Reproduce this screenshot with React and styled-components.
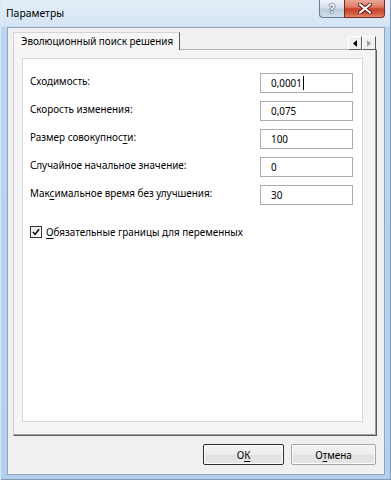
import React from "react";
import styled, { createGlobalStyle } from "styled-components";

const FONT = `"Noto Sans", "Open Sans", "DejaVu Sans", sans-serif`;
const FS = "9.9px";

const Global = createGlobalStyle`
  html, body { margin: 0; padding: 0; background: #ffffff; }
  body { font-family: ${FONT}; }
  * { box-sizing: border-box; }
`;

const Window = styled.div`
  width: 391px;
  height: 480px;
  display: flex;
  flex-direction: column;
  font-family: ${FONT};
  font-size: ${FS};
  color: #000;
  background: linear-gradient(180deg, #e3edf8 0px, #d6e5f4 26px, #bcd5ef 27px, #b4cfec 100%);
  box-shadow: inset 1px 0 0 #d9e8f7, inset -1px 0 0 #7f9bbb, inset 0 -1px 0 #7f9bbb;
`;

const TitleBar = styled.div`
  height: 27px;
  display: flex;
  align-items: flex-start;
  justify-content: space-between;
  padding: 0 6px 0 6px;
`;

const Title = styled.div`
  padding-top: 5px;
  line-height: 16px;
  font-size: 10.4px;
  color: #000;
`;

const CaptionButtons = styled.div`
  display: flex;
`;

const HelpButton = styled.div`
  width: 25px;
  height: 18px;
  display: flex;
  align-items: center;
  justify-content: center;
  border: 1px solid #6a7d94;
  border-top: none;
  border-right: none;
  border-radius: 0 0 0 4px;
  background: linear-gradient(180deg, #eef3f9 0%, #d3dfec 48%, #bccbdc 52%, #cfdceb 100%);
  color: #fff;
  font-weight: bold;
  font-size: 12px;
  line-height: 1;
  text-shadow: 0 0 1px #35475c, 0 0 1px #35475c, 0 0 2px #35475c;
`;

const CloseButton = styled.div`
  width: 41px;
  height: 18px;
  display: flex;
  align-items: center;
  justify-content: center;
  border: 1px solid #7a2a1c;
  border-top: none;
  border-radius: 0 0 4px 0;
  background: linear-gradient(180deg, #eaa898 0%, #dc7a65 42%, #c8452c 52%, #d25b42 80%, #e08a72 100%);
`;

const Client = styled.div`
  flex: 1;
  margin: 0 6px 5px 7px;
  border: 1px solid #8ea6c2;
  background: #f0f0f0;
  display: flex;
  flex-direction: column;
  padding: 4px 7px 0 5px;
`;

const TabControl = styled.div`
  flex: 1;
  display: flex;
  flex-direction: column;
`;

const TabStrip = styled.div`
  height: 18px;
  display: flex;
  align-items: stretch;
`;

const Tab = styled.div`
  width: 167px;
  background: #f6f6f6;
  border-top: 1px solid #d4d4d4;
  border-left: 1px solid #d4d4d4;
  border-right: 1px solid #5a5a5a;
  padding-left: 7px;
  line-height: 17px;
  white-space: nowrap;
`;

const StripRest = styled.div`
  flex: 1;
  display: flex;
  justify-content: flex-end;
  align-items: flex-end;
  border-bottom: 1px solid #b4b4b4;
  padding-right: 1px;
`;

const ScrollButtons = styled.div`
  display: flex;
  margin-bottom: -1px;
`;

const ScrollButton = styled.div`
  width: 14px;
  height: 14px;
  display: flex;
  align-items: center;
  justify-content: center;
  background: #f0f0f0;
  border-top: 1px solid #ffffff;
  border-left: 1px solid #ffffff;
  border-right: 1px solid #5a5a5a;
  border-bottom: 1px solid #5a5a5a;
`;

const TabPage = styled.div`
  flex: 1;
  display: flex;
  background: #f4f4f4;
  border-left: 1px solid #d0d0d0;
  border-right: 1px solid #5a5a5a;
  border-bottom: 1px solid #5a5a5a;
  box-shadow: inset -1px 0 0 #a0a0a0, inset 0 -1px 0 #a0a0a0;
  padding: 8px 13px 13px 8px;
`;

const Panel = styled.div`
  flex: 1;
  background: #fff;
  border: 1px solid #d9d9d9;
  padding: 14px 9px 0 7px;
`;

const Fields = styled.div`
  display: grid;
  grid-template-columns: 1fr 93px;
  row-gap: 8px;
  align-items: start;
`;

const Label = styled.div`
  padding-top: 1px;
  line-height: 14px;
  white-space: nowrap;
`;

const Input = styled.div`
  height: 20px;
  border: 1px solid #acacac;
  background: #fff;
  padding-left: 10px;
  display: flex;
  align-items: center;
  line-height: 14px;
`;

const Caret = styled.span`
  display: inline-block;
  width: 1px;
  height: 14px;
  margin-left: 1px;
  background: #000;
`;

const Key = styled.span`
  text-decoration: underline;
  text-underline-offset: 2px;
`;

const CheckRow = styled.div`
  display: flex;
  align-items: center;
  gap: 4px;
  margin-top: 20px;
  line-height: 14px;
`;

const CheckBox = styled.div`
  width: 12px;
  height: 12px;
  border: 1px solid #333;
  background: linear-gradient(135deg, #e8e8e8, #ffffff);
  display: flex;
  align-items: center;
  justify-content: center;
`;

const Footer = styled.div`
  display: flex;
  justify-content: flex-end;
  gap: 7px;
  padding: 8px 1px 9px 0;
`;

const Button = styled.div`
  width: ${(p) => p.$width}px;
  height: 21px;
  display: flex;
  align-items: center;
  justify-content: center;
  border-radius: 2px;
  border: 1px solid ${(p) => (p.$default ? "#2e2e2e" : "#a5a5a5")};
  box-shadow: inset 0 0 0 1px #fbfbfb;
  background: linear-gradient(180deg, #f4f4f4 0%, #ececec 50%, #e0e0e0 51%, #e6e6e6 100%);
`;

const rows = [
  { label: "Сходимость:", value: "0,0001", caret: true },
  { label: "Скорость изменения:", value: "0,075" },
  { label: <>Размер совокупнос<Key>т</Key>и:</>, value: "100" },
  { label: "Случайное начальное значение:", value: "0" },
  { label: <>Мак<Key>с</Key>имальное время без улучшения:</>, value: "30" },
];

export default function App() {
  return (
    <>
      <Global />
      <Window>
        <TitleBar>
          <Title>Параметры</Title>
          <CaptionButtons>
            <HelpButton>?</HelpButton>
            <CloseButton>
              <svg width="14" height="11" viewBox="0 0 14 11">
                <path d="M2 1.5 L12 9.5 M12 1.5 L2 9.5" stroke="#5a1a10" strokeWidth="4" strokeLinecap="round" />
                <path d="M2 1.5 L12 9.5 M12 1.5 L2 9.5" stroke="#ffffff" strokeWidth="2.2" strokeLinecap="round" />
              </svg>
            </CloseButton>
          </CaptionButtons>
        </TitleBar>
        <Client>
          <TabControl>
            <TabStrip>
              <Tab>Эволюционный поиск решения</Tab>
              <StripRest>
                <ScrollButtons>
                  <ScrollButton>
                    <svg width="4" height="7" viewBox="0 0 4 7">
                      <polygon points="4,0 0,3.5 4,7" fill="#000" />
                    </svg>
                  </ScrollButton>
                  <ScrollButton>
                    <svg width="4" height="7" viewBox="0 0 4 7">
                      <polygon points="0,0 4,3.5 0,7" fill="#a0a0a0" />
                    </svg>
                  </ScrollButton>
                </ScrollButtons>
              </StripRest>
            </TabStrip>
            <TabPage>
              <Panel>
                <Fields>
                  {rows.map((r, i) => (
                    <React.Fragment key={i}>
                      <Label>{r.label}</Label>
                      <Input>
                        {r.value}
                        {r.caret && <Caret />}
                      </Input>
                    </React.Fragment>
                  ))}
                </Fields>
                <CheckRow>
                  <CheckBox>
                    <svg width="8" height="8" viewBox="0 0 9 9">
                      <path d="M1 4.5 L3.5 7 L8 1.5" stroke="#111" strokeWidth="1.8" fill="none" />
                    </svg>
                  </CheckBox>
                  <span>
                    <Key>О</Key>бязательные границы для переменных
                  </span>
                </CheckRow>
              </Panel>
            </TabPage>
          </TabControl>
          <Footer>
            <Button $width={81} $default>
              О<Key>К</Key>
            </Button>
            <Button $width={85}>
              О<Key>т</Key>мена
            </Button>
          </Footer>
        </Client>
      </Window>
    </>
  );
}
